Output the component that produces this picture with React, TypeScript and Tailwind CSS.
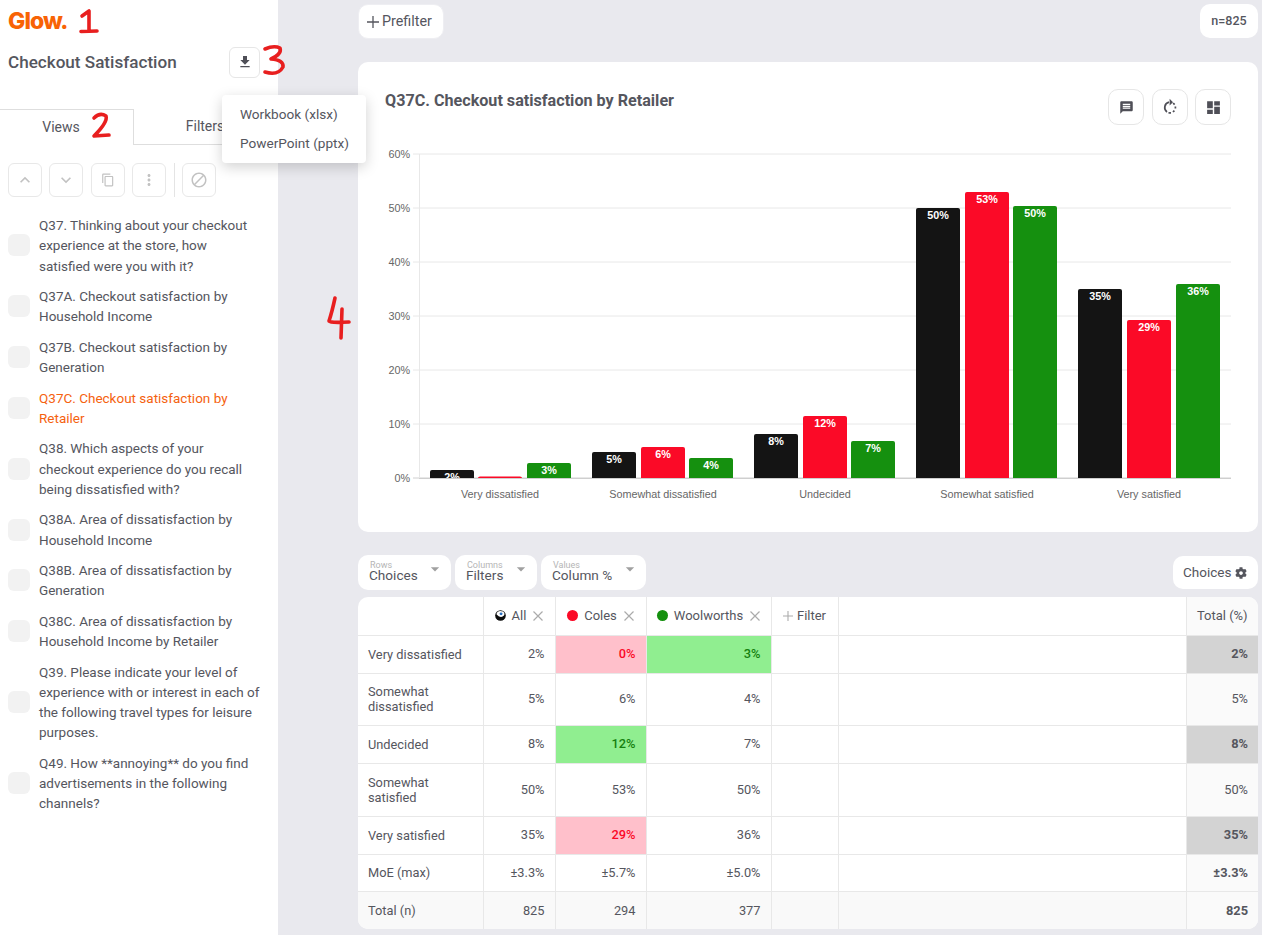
import React from "react";
import { MdFileDownload, MdMessage, MdDashboard, MdKeyboardArrowUp, MdKeyboardArrowDown, MdContentCopy, MdMoreVert, MdBlock, MdArrowDropDown } from "react-icons/md";
import { FaCog } from "react-icons/fa";

const views: { label: string; active?: boolean }[] = [
  { label: "Q37. Thinking about your checkout experience at the store, how satisfied were you with it?" },
  { label: "Q37A. Checkout satisfaction by Household Income" },
  { label: "Q37B. Checkout satisfaction by Generation" },
  { label: "Q37C. Checkout satisfaction by Retailer", active: true },
  { label: "Q38. Which aspects of your checkout experience do you recall being dissatisfied with?" },
  { label: "Q38A. Area of dissatisfaction by Household Income" },
  { label: "Q38B. Area of dissatisfaction by Generation" },
  { label: "Q38C. Area of dissatisfaction by Household Income by Retailer" },
  { label: "Q39. Please indicate your level of experience with or interest in each of the following travel types for leisure purposes." },
  { label: "Q49. How **annoying** do you find advertisements in the following channels?" },
];

const BLACK = "#141414";
const RED = "#fb0a27";
const GREEN = "#15900f";

const groups = [
  { name: "Very dissatisfied", x: [430, 478, 527], top: [470, 476.5, 463], labels: ["2%", "", "3%"] },
  { name: "Somewhat dissatisfied", x: [592, 641, 689], top: [452, 447, 458], labels: ["5%", "6%", "4%"] },
  { name: "Undecided", x: [754, 803, 851], top: [434, 416, 441], labels: ["8%", "12%", "7%"] },
  { name: "Somewhat satisfied", x: [916, 965, 1013], top: [208, 192, 206], labels: ["50%", "53%", "50%"] },
  { name: "Very satisfied", x: [1078, 1127, 1176], top: [289, 320, 284], labels: ["35%", "29%", "36%"] },
];
const colors = [BLACK, RED, GREEN];

function Chart() {
  const ticks = [0, 10, 20, 30, 40, 50, 60];
  return (
    <svg viewBox="358 140 900 370" width={900} height={370} className="block -mx-[27px] max-w-none" fontFamily="'Liberation Sans', Arial, sans-serif">
      {ticks.map((t) => {
        const y = 478 - t * 5.4;
        return (
          <g key={t}>
            <line x1={413} x2={1231} y1={y} y2={y} stroke={t === 0 ? "#d0d0d0" : "#e8e8e8"} strokeWidth={1} />
            <text x={410} y={y + 4} textAnchor="end" fontSize={10.8} fill="#666">{t}%</text>
          </g>
        );
      })}
      <line x1={419.5} x2={419.5} y1={154} y2={478} stroke="#e8e8e8" />
      {groups.map((g) => (
        <g key={g.name}>
          {g.x.map((x, i) => {
            const top = g.top[i];
            return (
              <g key={i}>
                <path d={`M${x} 478 V${Math.min(top + 2, 478)} Q${x} ${top} ${x + 2} ${top} H${x + 42} Q${x + 44} ${top} ${x + 44} ${Math.min(top + 2, 478)} V478 Z`} fill={colors[i]} />
                {g.labels[i] && (
                  <text x={x + 22} y={top + 11} textAnchor="middle" fontSize={10.8} fontWeight={700} fill="#fff">{g.labels[i]}</text>
                )}
              </g>
            );
          })}
          <text x={g.x[1] + 22} y={498} textAnchor="middle" fontSize={10.8} fill="#666">{g.name}</text>
        </g>
      ))}
      <line x1={419} x2={1231} y1={478.5} y2={478.5} stroke="#cfcfcf" />
    </svg>
  );
}

function RefreshIcon() {
  return (
    <svg width="16" height="18" viewBox="0 0 16 18" fill="none">
      <path d="M7 4.2 A5.5 5.5 0 0 0 5 14" stroke="#4f4f57" strokeWidth="1.7" />
      <path d="M6.5 14.9 H9" stroke="#4f4f57" strokeWidth="1.7" />
      <path d="M11 14 L12.4 12.6 M13.4 10.5 V8.4 M12.6 6.6 L11.2 5" stroke="#4f4f57" strokeWidth="1.7" />
      <path d="M7.6 0.8 L11 4.2 L7.6 7.4 Z" fill="#4f4f57" />
    </svg>
  );
}

function AllIcon() {
  return (
    <svg width="11" height="11" viewBox="0 0 12 12" className="shrink-0">
      <circle cx="6" cy="6" r="5.8" fill="#0c0c0c" />
      <path d="M1.8 4.8 A4 3 0 0 1 7 1.4 A3 3 0 0 1 9.8 6 A4 3 0 0 1 4 6.8 Z" fill="#fff" />
      <circle cx="6.6" cy="4.2" r="1.6" fill="#2a6fc0" />
    </svg>
  );
}

const XMark = () => (
  <svg width="10" height="10" viewBox="0 0 10 10" className="shrink-0" stroke="#ababab" strokeWidth="1.2" fill="none">
    <path d="M0.5 0.5 L9.5 9.5 M9.5 0.5 L0.5 9.5" />
  </svg>
);

const PlusMark = ({ s, color }: { s: number; color: string }) => (
  <svg width={s} height={s} viewBox="0 0 12 12" className="shrink-0" stroke={color} strokeWidth="1.3" fill="none">
    <path d="M6 0 V12 M0 6 H12" />
  </svg>
);

const Dot = ({ cls }: { cls: string }) => <span className={`inline-block h-[11px] w-[11px] rounded-full shrink-0 ${cls}`} />;

type Cell = { t: string; c?: "pink" | "green" };

const rows: { label: string; cells: Cell[]; total: string; totalGray?: boolean; h: string; kind?: string }[] = [
  { label: "Very dissatisfied", cells: [{ t: "2%" }, { t: "0%", c: "pink" }, { t: "3%", c: "green" }], total: "2%", totalGray: true, h: "h-[38px]" },
  { label: "Somewhat dissatisfied", cells: [{ t: "5%" }, { t: "6%" }, { t: "4%" }], total: "5%", h: "h-[52px]" },
  { label: "Undecided", cells: [{ t: "8%" }, { t: "12%", c: "green" }, { t: "7%" }], total: "8%", totalGray: true, h: "h-[38px]" },
  { label: "Somewhat satisfied", cells: [{ t: "50%" }, { t: "53%" }, { t: "50%" }], total: "50%", h: "h-[53px]" },
  { label: "Very satisfied", cells: [{ t: "35%" }, { t: "29%", c: "pink" }, { t: "36%" }], total: "35%", totalGray: true, h: "h-[38px]" },
  { label: "MoE (max)", cells: [{ t: "±3.3%" }, { t: "±5.7%" }, { t: "±5.0%" }], total: "±3.3%", h: "h-[37px]", kind: "moe" },
  { label: "Total (n)", cells: [{ t: "825" }, { t: "294" }, { t: "377" }], total: "825", h: "h-[38px]", kind: "total" },
];

const ToolBtn = ({ children }: { children: React.ReactNode }) => (
  <button className="flex h-[34px] w-[34px] items-center justify-center rounded-md border border-[#e8e8e8] bg-white text-[#c2c2c2]">{children}</button>
);

const IconBtn = ({ children }: { children: React.ReactNode }) => (
  <button className="flex h-[36px] w-[36px] items-center justify-center rounded-[10px] border border-[#e6e6e6] bg-white text-[#4f4f57]">{children}</button>
);

const Select = ({ small, value, w }: { small: string; value: string; w: string }) => (
  <div className={`relative flex h-[35px] items-end rounded-[10px] bg-white pl-[11px] ${w}`}>
    <span className="absolute left-[12px] top-[7px] text-[9px] leading-[6px] text-[#b5b5b5]">{small}</span>
    <span className="pb-[8px] text-[13.6px] leading-[14px]">{value}</span>
    <MdArrowDropDown className="absolute right-[6px] top-[4px] text-[#a0a0a0]" size={20} />
  </div>
);

export default function App() {
  const td = "border border-[#e8e8e8] px-[10px] text-right align-middle";
  return (
    <div className="relative flex h-[935px] w-[1262px] overflow-hidden bg-[#e9e9ee] text-[#55565e]" style={{ fontFamily: "Roboto, sans-serif" }}>
      <aside className="flex h-full w-[278px] shrink-0 flex-col bg-white">
        <div className="flex h-[42px] items-center pl-[8px] text-[23px] font-extrabold leading-none tracking-[-0.9px] text-[#f86305]" style={{ fontFamily: "Inter, sans-serif" }}>Glow.</div>
        <div className="flex h-[40px] items-center justify-between pl-[8px] pr-[18px]">
          <h1 className="mt-[2px] text-[17.1px] font-medium">Checkout Satisfaction</h1>
          <button className="flex h-[31px] w-[31px] items-center justify-center rounded-md border border-[#e6e6e6] text-[#4f4f57]"><MdFileDownload size={16} /></button>
        </div>
        <div className="mt-[27px] flex h-[36px] text-[14px]">
          <div className="flex w-[134px] items-center justify-center border-r border-t border-[#dedede] pr-[11px]">Views</div>
          <div className="flex flex-1 items-center justify-center border-b border-[#dedede] pr-[2px]">Filters</div>
        </div>
        <div className="mt-[18px] flex items-center pl-[8px]">
          <ToolBtn><MdKeyboardArrowUp size={20} /></ToolBtn>
          <div className="ml-[7px]"><ToolBtn><MdKeyboardArrowDown size={20} /></ToolBtn></div>
          <div className="ml-[8px]"><ToolBtn><MdContentCopy size={14} /></ToolBtn></div>
          <div className="ml-[7px]"><ToolBtn><MdMoreVert size={18} /></ToolBtn></div>
          <div className="ml-[8px] mr-[7px] h-[34px] w-px bg-[#e4e4e4]" />
          <ToolBtn><MdBlock size={18} /></ToolBtn>
        </div>
        <ul className="mt-[18px] flex flex-col gap-[10.25px] pl-[8px] pr-[17px]">
          {views.map((v) => (
            <li key={v.label} className="flex items-center gap-[9px]">
              <span className="h-[22px] w-[22px] shrink-0 rounded-md bg-[#f2f2f2]" />
              <span className={`text-[13.5px] leading-[20.25px] ${v.active ? "text-[#f5620f]" : ""}`}>{v.label}</span>
            </li>
          ))}
        </ul>
      </aside>

      <main className="flex w-[984px] flex-col pl-[80px] pr-[4px] pt-[4px]">
        <div className="flex items-start justify-between">
          <button className="flex h-[35px] w-[86px] items-center gap-[3px] rounded-[10px] border border-[#eeeef2] bg-white pl-[8px] text-[14.3px]"><PlusMark s={12} color="#55565e" />Prefilter</button>
          <div className="flex h-[34px] w-[58px] items-center justify-center rounded-[10px] bg-white text-[12.5px] font-medium">n=825</div>
        </div>
        <section className="mt-[23px] h-[470px] rounded-[10px] bg-white px-[27px] pt-[27px]">
          <div className="flex h-[36px] items-start justify-between">
            <h2 className="pt-[2px] text-[16.15px] font-bold leading-[20px]">Q37C. Checkout satisfaction by Retailer</h2>
            <div className="flex gap-[7.5px]">
              <IconBtn><MdMessage size={15} /></IconBtn>
              <IconBtn><RefreshIcon /></IconBtn>
              <IconBtn><MdDashboard size={17} /></IconBtn>
            </div>
          </div>
          <div className="mt-[15px]"><Chart /></div>
        </section>
        <div className="mt-[23px] flex items-center gap-[4px]">
          <Select small="Rows" value="Choices" w="w-[93px]" />
          <Select small="Columns" value="Filters" w="w-[82px]" />
          <Select small="Values" value="Column %" w="w-[105px]" />
          <button className="ml-auto flex h-[33px] w-[85px] items-center gap-[4px] rounded-[10px] bg-white pl-[10px] text-[13.5px]">Choices <FaCog size={12} /></button>
        </div>
        <div className="mt-[7px] overflow-hidden rounded-[10px] bg-white">
          <table className="w-[900px] table-fixed border-collapse border-hidden text-[12.8px]">
            <colgroup>
              <col className="w-[125px]" /><col className="w-[72px]" /><col className="w-[91px]" /><col className="w-[125px]" /><col className="w-[67px]" /><col className="w-[348px]" /><col className="w-[72px]" />
            </colgroup>
            <thead className="text-[13px]">
              <tr className="h-[38px]">
                <th className="border border-[#e8e8e8]" />
                <th className="border border-[#e8e8e8] font-normal">
                  <div className="flex items-center justify-center"><AllIcon /><span className="ml-[6px] mr-[7px]">All</span><XMark /></div>
                </th>
                <th className="border border-[#e8e8e8] font-normal">
                  <div className="flex items-center justify-center"><Dot cls="bg-[#fb0a27]" /><span className="ml-[6px] mr-[7px]">Coles</span><XMark /></div>
                </th>
                <th className="border border-[#e8e8e8] font-normal">
                  <div className="flex items-center justify-center"><Dot cls="bg-[#15900f]" /><span className="ml-[6px] mr-[7px]">Woolworths</span><XMark /></div>
                </th>
                <th className="border border-[#e8e8e8] font-normal">
                  <div className="flex items-center justify-center gap-[4px]"><PlusMark s={10} color="#ababab" />Filter</div>
                </th>
                <th className="border border-[#e8e8e8]" />
                <th className="border border-[#e8e8e8] bg-[#fafafa] font-normal">Total (%)</th>
              </tr>
            </thead>
            <tbody>
              {rows.map((r) => {
                const rowBg = r.kind === "total" ? "bg-[#f9f9f9]" : "";
                return (
                  <tr key={r.label} className={`${r.h} ${rowBg}`}>
                    <td className="border border-[#e8e8e8] px-[10px] text-left leading-[15px]">{r.label}</td>
                    {r.cells.map((c, i) => (
                      <td key={i} className={`${td} ${c.c === "pink" ? "bg-[#ffc0cb] font-medium text-[#fb0a27]" : c.c === "green" ? "bg-[#90ee90] font-medium text-[#15800f]" : ""}`}>{c.t}</td>
                    ))}
                    <td className="border border-[#e8e8e8]" />
                    <td className="border border-[#e8e8e8]" />
                    <td className={`${td} ${r.totalGray ? "bg-[#d3d3d3] font-bold" : r.kind === "moe" || r.kind === "total" ? "bg-[#fafafa] font-bold" : "bg-[#fafafa]"}`}>{r.total}</td>
                  </tr>
                );
              })}
            </tbody>
          </table>
        </div>
      </main>

      {/* export menu */}
      <div className="absolute left-[222px] top-[95px] flex h-[68px] w-[144px] flex-col justify-center gap-[8px] rounded-[4px] bg-white pl-[18px] text-[13.6px] leading-[21px] shadow-[0_4px_14px_rgba(0,0,0,0.18)]">
        <div>Workbook (xlsx)</div>
        <div>PowerPoint (pptx)</div>
      </div>

      {/* hand-drawn annotations */}
      <svg className="pointer-events-none absolute left-0 top-0" width={1262} height={935} fill="none" stroke="#e81f1f" strokeWidth={3.6} strokeLinecap="round" strokeLinejoin="round">
        <path d="M82 16 L89 11 L89 31 M81 31.5 L97 31" />
        <path d="M94 118 Q100 112 106 116 Q108 122 94 136 L109 135" />
        <path d="M265 49 Q274 45 280 48 Q282 54 271 59 Q284 60 283 67 Q278 76 265 72" />
        <path d="M335 298 Q332 312 329 321 Q329 323 349 322 M342 309 L341 338" />
      </svg>
    </div>
  );
}
